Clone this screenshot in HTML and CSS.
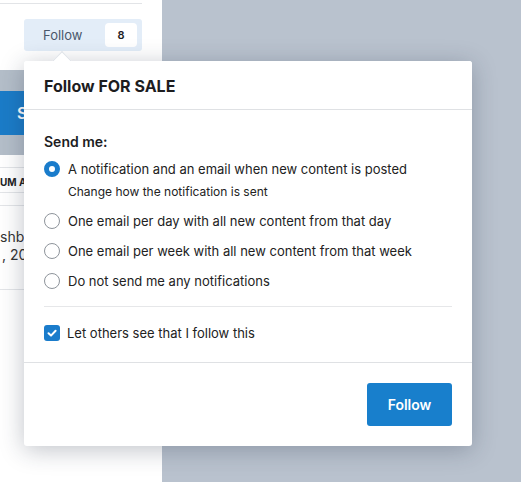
FILE: index.html
```html
<!DOCTYPE html>
<html>
<head>
<meta charset="utf-8">
<link rel="stylesheet" href="styles.css">
</head>
<body>
<div class="page">
  <div class="left">
    <div class="top">
      <div class="topline"></div>
      <div class="follow-btn"><span class="follow-label">Follow</span><span class="badge">8</span></div>
    </div>
    <div class="gray g1"></div>
    <div class="bluebar"><span>S</span></div>
    <div class="gray g2"></div>
    <div class="table">
      <div class="trow th">UM AS</div>
      <div class="trow spacer"></div>
      <div class="trow cell"><div>shb</div><div class="c2">, 20</div></div>
    </div>
  </div>
  <div class="right"></div>
</div>

<div class="popup">
  <div class="arrow"></div>
  <div class="p-head">Follow FOR SALE</div>
  <div class="p-body">
    <div class="label">Send me:</div>
    <div class="options">
      <div class="opt">
        <span class="radio on"></span>
        <div class="opt-text">A notification and an email when new content is posted<div class="hint">Change how the notification is sent</div></div>
      </div>
      <div class="opt"><span class="radio"></span><div class="opt-text">One email per day with all new content from that day</div></div>
      <div class="opt"><span class="radio"></span><div class="opt-text">One email per week with all new content from that week</div></div>
      <div class="opt"><span class="radio"></span><div class="opt-text">Do not send me any notifications</div></div>
    </div>
    <div class="sep"></div>
    <div class="check-row">
      <span class="checkbox"><svg viewBox="0 0 16 16" width="16" height="16"><path d="M4.5 8.3 L7 10.6 L11.6 5.8" fill="none" stroke="#fff" stroke-width="2" stroke-linecap="round" stroke-linejoin="round"/></svg></span>
      <span>Let others see that I follow this</span>
    </div>
  </div>
  <div class="p-foot">
    <button class="submit">Follow</button>
  </div>
</div>
</body>
</html>
```
FILE: styles.css
```css
* { box-sizing: border-box; }
html, body { margin: 0; padding: 0; }
body {
  width: 521px; height: 482px; overflow: hidden;
  font-family: Inter, "Noto Sans", "Liberation Sans", sans-serif;
  color: #1d1d1f;
  position: relative;
  background: #b9c2ce;
}
.page { display: flex; height: 482px; }
.left { width: 162px; display: flex; flex-direction: column; background: #fff; }
.right { flex: 1; background: #b9c2ce; }
.top { height: 70px; background: #fff; padding-top: 3px; }
.topline { height: 1px; width: 142px; background: #e2e4e7; }
.follow-btn {
  margin: 15px 0 0 24px; width: 118px; height: 32px;
  background: #e3edf8; border-radius: 3px;
  display: flex; align-items: center; justify-content: space-between;
  padding: 0 5px 0 19px;
}
.follow-label { font-size: 13px; color: #4a586b; }
.badge {
  width: 32px; height: 24px; background: #fff; border-radius: 4px;
  display: flex; align-items: center; justify-content: center;
  font-size: 11px; font-weight: 600; color: #1d1d1f;
}
.gray { background: #b4bec9; }
.g1 { height: 21px; }
.g2 { height: 20px; }
.bluebar {
  height: 44px; background: #1b7cc8; color: #fff;
  font-weight: 600; font-size: 16px; display: flex; align-items: center; padding-left: 17px;
}
.table { flex: 1; background: #fff; padding-top: 12px; }
.trow { border-top: 1px solid #e3e5e8; }
.th { height: 25px; font-size: 10px; font-weight: 700; padding-top: 8px; color: #222; }
.spacer { height: 13px; }
.cell { height: 85px; border-bottom: 1px solid #e3e5e8; padding-top: 22px; font-size: 14px; color: #333; line-height: 18px; }
.c2 { padding-left: 2px; }

.popup {
  position: absolute; left: 24px; top: 61px; width: 448px; height: 385px;
  background: #fff; border-radius: 3px;
  box-shadow: 0 4px 24px rgba(30, 40, 60, 0.28);
  display: flex; flex-direction: column;
}
.arrow {
  position: absolute; left: 31px; top: -7px; width: 14px; height: 14px;
  background: #fff; transform: rotate(45deg);
  border-left: 1px solid #dfe3e8; border-top: 1px solid #dfe3e8;
}
.p-head {
  height: 49px; border-bottom: 1px solid #dfe1e4;
  padding: 15px 20px 0; font-size: 16px; font-weight: 700; color: #1d1d1f;
  position: relative; background: #fff; border-radius: 3px 3px 0 0;
}
.p-body { padding: 22px 20px 0; height: 253px; border-bottom: 1px solid #dfe1e4; }
.label { font-size: 14px; font-weight: 600; height: 20px; line-height: 20px; }
.options { margin-top: 8px; display: flex; flex-direction: column; gap: 11px; }
.opt { display: flex; align-items: flex-start; gap: 8px; font-size: 13px; line-height: 19px; color: #222; }
.radio {
  width: 16px; height: 16px; border-radius: 50%; border: 1px solid #8e949b;
  flex: none; margin-top: 1px; background: #fff;
}
.radio.on { border: 5px solid #1a7ccb; }
.hint { font-size: 12px; color: #222; margin-top: 3px; line-height: 19px; }
.sep { height: 1px; background: #e6e7e9; margin-top: 15px; }
.check-row { display: flex; align-items: center; gap: 7px; margin-top: 18px; font-size: 13px; color: #222; }
.checkbox {
  width: 16px; height: 16px; border-radius: 3px; background: #1a7ccb; display: flex; flex: none;
}
.p-foot { flex: 1; display: flex; justify-content: flex-end; align-items: flex-start; padding: 20px 20px 0; }
.submit {
  width: 85px; height: 43px; background: #187fcc; color: #fff; border: none; border-radius: 3px;
  font-family: inherit; font-size: 14px; font-weight: 600;
}
```
